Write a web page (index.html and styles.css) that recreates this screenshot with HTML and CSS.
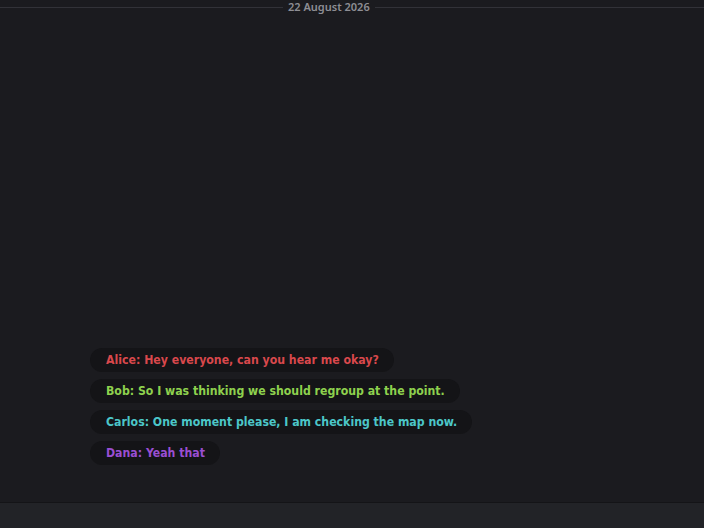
FILE: index.html
```html
<!DOCTYPE html>
<html>
<head>
<meta charset="utf-8">
<link rel="stylesheet" href="styles.css">
</head>
<body>
<div class="app">
  <div class="date-divider"><span class="date-line date-line-left"></span><span class="date-text">22 August 2026</span><span class="date-line"></span></div>
  <div class="messages">
    <div class="pill alice">Alice: Hey everyone, can you hear me okay?</div>
    <div class="pill bob">Bob: So I was thinking we should regroup at the point.</div>
    <div class="pill carlos">Carlos: One moment please, I am checking the map now.</div>
    <div class="pill dana">Dana: Yeah that</div>
  </div>
  <div class="bottom-bar"></div>
</div>
</body>
</html>
```

FILE: styles.css
```css
html, body {
  margin: 0;
  padding: 0;
  background: #1b1b1f;
}
.app {
  width: 704px;
  height: 528px;
  display: flex;
  flex-direction: column;
  background: #1b1b1f;
  font-family: "DejaVu Sans", Verdana, sans-serif;
}
.date-divider {
  display: flex;
  align-items: center;
  height: 14px;
  gap: 5px;
}
.date-line {
  flex: 1;
  height: 1px;
  background: #323238;
}
.date-line-left {
  flex: 0 0 283px;
}
.date-text {
  font-size: 11px;
  font-weight: 600;
  color: #8e8e94;
  font-family: "Noto Sans", sans-serif;
  line-height: 14px;
}
.messages {
  flex: 1;
  display: flex;
  flex-direction: column;
  justify-content: flex-end;
  align-items: flex-start;
  gap: 7px;
  padding: 0 0 37px 90px;
}
.pill {
  height: 24px;
  line-height: 24px;
  padding: 0 15px 0 16px;
  border-radius: 12px;
  background: #141417;
  font-size: 12.2px;
  font-weight: bold;
  white-space: nowrap;
  font-family: "DejaVu Sans Condensed", "DejaVu Sans", sans-serif;
  font-stretch: condensed;
}
.alice { color: #d9484c; }
.bob { color: #8ed14e; }
.carlos { color: #4cc7c9; }
.dana { color: #9a4ed2; }
.bottom-bar {
  height: 25px;
  border-top: 1px solid #141417;
  background: #222327;
}
```
